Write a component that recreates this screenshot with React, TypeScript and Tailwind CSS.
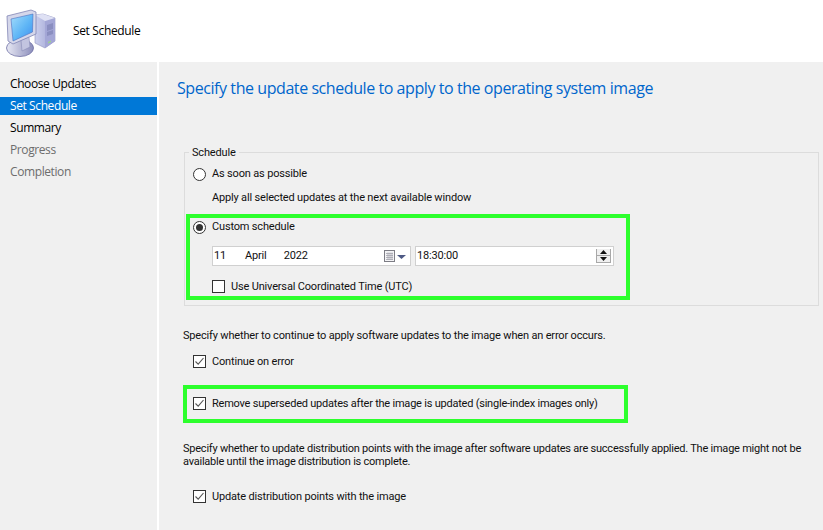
import { ReactNode } from "react"

const uiFont = "font-['Roboto','Liberation_Sans',sans-serif]"
const segoeFont = "font-['Open_Sans','Noto_Sans',sans-serif]"

function ComputerIcon() {
    return (
        <svg width="58" height="56" viewBox="0 0 58 56" className="block">
            <defs>
                <linearGradient id="screen" x1="0" y1="0" x2="1" y2="1">
                    <stop offset="0" stopColor="#a5ddfb" />
                    <stop offset="0.55" stopColor="#5fb6f6" />
                    <stop offset="1" stopColor="#3d8ff0" />
                </linearGradient>
                <linearGradient id="tower" x1="0" y1="0" x2="1" y2="0">
                    <stop offset="0" stopColor="#ccd0ee" />
                    <stop offset="1" stopColor="#9a9ecf" />
                </linearGradient>
                <linearGradient id="base" x1="0" y1="0" x2="1" y2="0">
                    <stop offset="0" stopColor="#e8e9f4" />
                    <stop offset="1" stopColor="#8b8dbb" />
                </linearGradient>
            </defs>
            <path d="M35 12 L43 11 L55 15 L55 38 L45 45 L35 40 Z" fill="url(#tower)" stroke="#8e91be" strokeWidth="0.6" />
            <path d="M45 18 L55 15 L55 38 L45 45 Z" fill="#a3a6d6" />
            <path d="M35 12 L43 11 L55 15 L45 18 Z" fill="#dfe1f4" />
            <path d="M47 22 L53 20 L53 26 L47 28 Z" fill="#8a8ec0" />
            <path d="M47 29 L53 27 L53 31 L47 33 Z" fill="#8a8ec0" />
            <path d="M48 39 L51 37.5 L51 39 L48 40.5 Z" fill="#9bd58a" />
            <ellipse cx="20" cy="45" rx="13.5" ry="8.5" fill="url(#base)" stroke="#6e70a4" strokeWidth="0.8" />
            <path d="M21 37 L29 34 L30 44 L22 48 Z" fill="#c2c4e0" stroke="#7f82b0" strokeWidth="0.5" />
            <path d="M7 13 L31 7 L36 9 L36 31 L13 41 L8 38 Z" fill="#d5d7ea" stroke="#8285b5" strokeWidth="0.8" />
            <path d="M11 16 L33 11 L32.5 29 L13 38 Z" fill="url(#screen)" stroke="#4d6fc0" strokeWidth="0.6" />
        </svg>
    )
}

function Radio({ checked }: { checked?: boolean }) {
    return (
        <span className="w-[13px] h-[13px] rounded-full border border-[#333] bg-white flex items-center justify-center shrink-0">
            {checked && <span className="w-[7px] h-[7px] rounded-full bg-[#333]" />}
        </span>
    )
}

function Check({ checked }: { checked?: boolean }) {
    return (
        <span className="w-[13px] h-[13px] border border-[#333] bg-white shrink-0 block">
            {checked && (
                <svg width="11" height="11" viewBox="0 0 11 11" className="block">
                    <path d="M1.5 5.5 L4.2 8.2 L9.5 2" fill="none" stroke="#555" strokeWidth="1.1" />
                </svg>
            )}
        </span>
    )
}

function Label({ children, tight }: { children: ReactNode; tight?: boolean }) {
    return <span className={"text-[11px] text-[#111] whitespace-nowrap leading-[14px] " + (tight ? "tracking-[-0.22px]" : "tracking-[-0.17px]")}>{children}</span>
}

function NavItem({ text, state }: { text: string; state: "done" | "active" | "off" }) {
    const colors = state === "active" ? "bg-[#0078d7] text-white" : state === "done" ? "text-black" : "text-[#6d6d6d]"
    return <div className={"h-[18px] mb-[4px] pl-[10px] flex items-center text-[12px] tracking-[-0.4px] " + colors}>{text}</div>
}

export default function App() {
    return (
        <div className={"w-[823px] h-[530px] bg-white overflow-hidden flex flex-col " + uiFont}>
            <div className="h-[62px] shrink-0 flex items-center">
                <ComputerIcon />
                <span className={"ml-[15px] text-[12px] tracking-[-0.35px] text-black " + segoeFont}>Set Schedule</span>
            </div>
            <div className="flex-1 flex gap-[2px]">
                <div className={"w-[157px] bg-[#f0f0f0] pt-[13px] " + segoeFont}>
                    <NavItem text="Choose Updates" state="done" />
                    <NavItem text="Set Schedule" state="active" />
                    <NavItem text="Summary" state="done" />
                    <NavItem text="Progress" state="off" />
                    <NavItem text="Completion" state="off" />
                </div>
                <div className="flex-1 bg-[#f0f0f0] pl-[18px] pt-[15px] relative">
                    <h1 className={"text-[16px] leading-[22px] text-[#0066cc] whitespace-nowrap tracking-[-0.43px] " + segoeFont}>
                        Specify the update schedule to apply to the operating system image
                    </h1>

                    <fieldset className="mt-[45px] ml-[7px] w-[635px] h-[162px] border border-[#dcdcdc] pl-[8px]">
                        <legend className="px-[3px] ml-[-4px] leading-[14px]"><Label>Schedule</Label></legend>
                        <div className="flex items-center gap-[6px] mt-[7px]">
                            <Radio />
                            <Label>As soon as possible</Label>
                        </div>
                        <div className="ml-[19px] mt-[3px]"><Label>Apply all selected updates at the next available window</Label></div>
                        <div className="flex items-center gap-[6px] mt-[12px] h-[14px]">
                            <Radio checked />
                            <Label>Custom schedule</Label>
                        </div>
                        <div className="ml-[19px] mt-[12px] flex gap-[4px]">
                            <div className="w-[199px] h-[20px] bg-white border border-[#d0d0d0] flex items-center pl-[1px] pr-[3px]">
                                <Label>11</Label>
                                <span className="ml-[19px] flex"><Label>April</Label></span>
                                <span className="ml-[17px] flex"><Label>2022</Label></span>
                                <svg width="23" height="14" viewBox="0 0 23 14" className="ml-auto block">
                                    <rect x="0.5" y="1.5" width="10" height="11" fill="#f4f4f6" stroke="#7d7d85" />
                                    <path d="M2 4.5H9M2 6.5H9M2 8.5H9M2 10.5H9M4 3.5V11M6 3.5V11M8 3.5V11" stroke="#a5a5ae" strokeWidth="0.8" />
                                    <path d="M13 6H22L17.5 10Z" fill="#4e5a85" />
                                </svg>
                            </div>
                            <div className="w-[199px] h-[20px] bg-white border border-[#d0d0d0] flex items-center pl-[1px] pr-[2px]">
                                <Label>18:30:00</Label>
                                <div className="ml-auto w-[15px] h-[14px] bg-[#f0f0f0] border-x border-b border-[#a8a8a8] flex flex-col">
                                    <div className="flex-1 flex items-center justify-center border-b border-[#a8a8a8]">
                                        <svg width="7" height="4" viewBox="0 0 7 4" className="block"><path d="M0 4H7L3.5 0Z" fill="#111" /></svg>
                                    </div>
                                    <div className="flex-1 flex items-center justify-center">
                                        <svg width="7" height="4" viewBox="0 0 7 4" className="block"><path d="M0 0H7L3.5 4Z" fill="#111" /></svg>
                                    </div>
                                </div>
                            </div>
                        </div>
                        <div className="ml-[19px] mt-[14px] flex items-center gap-[6px] h-[13px]">
                            <Check />
                            <Label>Use Universal Coordinated Time (UTC)</Label>
                        </div>
                    </fieldset>

                    <div className="mt-[16px] ml-[6px]"><Label>Specify whether to continue to apply software updates to the image when an error occurs.</Label></div>
                    <div className="ml-[16px] mt-[9px] flex items-center gap-[6px] h-[13px]">
                        <Check checked />
                        <Label>Continue on error</Label>
                    </div>
                    <div className="ml-[16px] mt-[29px] flex items-center gap-[6px] h-[13px]">
                        <Check checked />
                        <Label tight>Remove superseded updates after the image is updated (single-index images only)</Label>
                    </div>
                    <div className="mt-[32px] ml-[6px] w-[626px] text-[11px] leading-[13px] tracking-[-0.23px] text-[#111]">
                        Specify whether to update distribution points with the image after software updates are successfully applied. The image might not be available until the image distribution is complete.
                    </div>
                    <div className="ml-[16px] mt-[22px] flex items-center gap-[6px] h-[13px]">
                        <Check checked />
                        <Label>Update distribution points with the image</Label>
                    </div>

                    {/* green highlight boxes drawn over the dialog */}
                    <div className="absolute left-[27px] top-[152px] w-[444px] h-[86px] border-[4px] border-[#2dff2d]" />
                    <div className="absolute left-[24px] top-[323px] w-[445px] h-[38px] border-[4px] border-[#2dff2d]" />
                </div>
            </div>
        </div>
    )
}
